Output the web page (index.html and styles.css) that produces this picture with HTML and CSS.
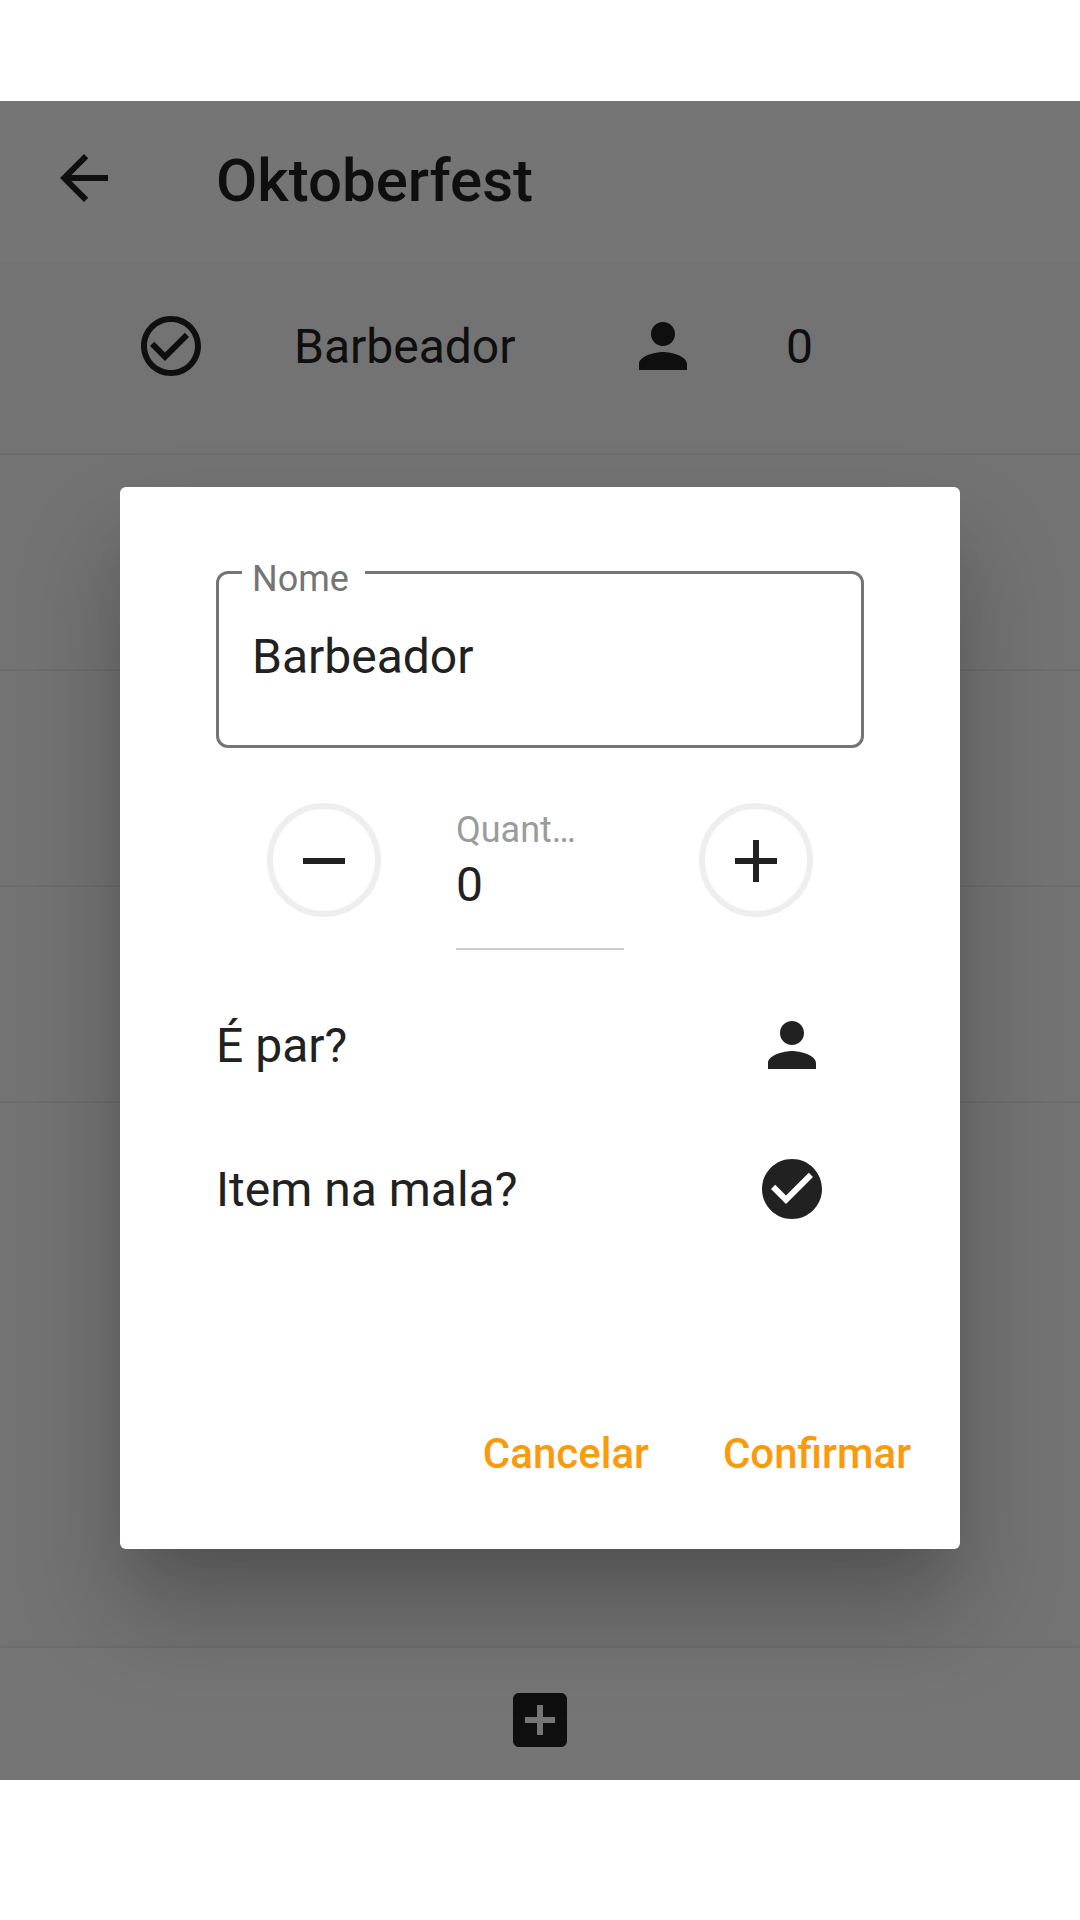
FILE: index.html
```html
<!DOCTYPE html>
<html lang="pt-BR">
<head>
<meta charset="utf-8">
<title>Oktoberfest</title>
<link rel="stylesheet" href="styles.css">
</head>
<body>
<div class="app">
  <header class="app-bar">
    <svg class="icon" viewBox="0 0 24 24"><path d="M20 11H7.83l5.59-5.59L12 4l-8 8 8 8 1.41-1.41L7.83 13H20v-2z"/></svg>
    <h1 class="app-title">Oktoberfest</h1>
  </header>
  <main class="list">
    <div class="row row-first">
      <svg class="icon" viewBox="0 0 24 24"><path d="M16.59 7.58L10 14.17l-3.59-3.58L5 12l5 5 8-8-1.41-1.42zM12 2C6.48 2 2 6.48 2 12s4.48 10 10 10 10-4.48 10-10S17.52 2 12 2zm0 18c-4.42 0-8-3.58-8-8s3.58-8 8-8 8 3.58 8 8-3.58 8-8 8z"/></svg>
      <span class="row-name">Barbeador</span>
      <svg class="icon" viewBox="0 0 24 24"><path d="M12 12c2.21 0 4-1.79 4-4s-1.79-4-4-4-4 1.79-4 4 1.79 4 4 4zm0 2c-2.67 0-8 1.34-8 4v2h16v-2c0-2.66-5.33-4-8-4z"/></svg>
      <span class="row-count">0</span>
    </div>
    <div class="row"></div>
    <div class="row"></div>
    <div class="row"></div>
  </main>
  <footer class="bottom-bar">
    <svg class="icon" viewBox="0 0 24 24"><path d="M19 3H5c-1.11 0-2 .9-2 2v14c0 1.1.89 2 2 2h14c1.1 0 2-.9 2-2V5c0-1.1-.9-2-2-2zm-2 10h-4v4h-2v-4H7v-2h4V7h2v4h4v2z"/></svg>
  </footer>
  <div class="scrim">
    <section class="dialog">
      <fieldset class="field">
        <legend class="field-gap"><span class="field-label">Nome</span></legend>
        <span class="field-value">Barbeador</span>
      </fieldset>
      <div class="stepper">
        <span class="round"><svg class="icon" viewBox="0 0 24 24"><path d="M19 13H5v-2h14v2z"/></svg></span>
        <div class="quantity">
          <span class="quantity-label">Quant…</span>
          <span class="quantity-value">0</span>
        </div>
        <span class="round"><svg class="icon" viewBox="0 0 24 24"><path d="M19 13h-6v6h-2v-6H5v-2h6V5h2v6h6v2z"/></svg></span>
      </div>
      <div class="option">
        <span class="option-label">É par?</span>
        <svg class="icon" viewBox="0 0 24 24"><path d="M12 12c2.21 0 4-1.79 4-4s-1.79-4-4-4-4 1.79-4 4 1.79 4 4 4zm0 2c-2.67 0-8 1.34-8 4v2h16v-2c0-2.66-5.33-4-8-4z"/></svg>
      </div>
      <div class="option">
        <span class="option-label">Item na mala?</span>
        <svg class="icon" viewBox="0 0 24 24"><path d="M12 2C6.48 2 2 6.48 2 12s4.48 10 10 10 10-4.48 10-10S17.52 2 12 2zm-2 15l-5-5 1.41-1.41L10 14.17l7.59-7.59L19 8l-9 9z"/></svg>
      </div>
      <div class="actions">
        <span class="action">Cancelar</span>
        <span class="action">Confirmar</span>
      </div>
    </section>
  </div>
</div>
</body>
</html>
```
FILE: styles.css
```css
* { box-sizing: border-box; }

body {
  margin: 0;
  padding: 101px 0 140px;
  height: 1920px;
  background: #fff;
  color: #212121;
  font: 400 48px/56px Roboto, sans-serif;
}

.icon {
  display: block;
  flex: none;
  width: 72px;
  height: 72px;
  fill: currentColor;
}

.app {
  position: relative;
  display: flex;
  flex-direction: column;
  height: 1679px;
  overflow: hidden;
  background: #fafafa;
}

.app-bar {
  display: flex;
  align-items: center;
  gap: 96px;
  height: 161px;
  padding: 0 48px 7px;
  background: #fff;
}

.app-title {
  margin: 6px 0 0;
  font-size: 60px;
  line-height: 70px;
  font-weight: 500;
}

.list {
  flex: 1;
}

.row {
  display: flex;
  align-items: center;
  height: 216px;
  padding-left: 135px;
  border-bottom: 2px solid #ebebeb;
}

.row-first {
  height: 193px;
  padding-bottom: 23px;
}

.row-name {
  width: 333px;
  margin-left: 87px;
  padding-top: 2px;
}

.row-count {
  margin-left: 87px;
  padding-top: 2px;
}

.bottom-bar {
  display: flex;
  justify-content: center;
  height: 132px;
  padding-top: 36px;
  background: #fff;
  box-shadow: 0 -1px 5px rgba(0, 0, 0, .1);
}

.scrim {
  position: absolute;
  inset: 0;
  padding: 386px 120px 0;
  background: rgba(0, 0, 0, .54);
}

.dialog {
  height: 1062px;
  padding: 84px 96px 0;
  border-radius: 6px;
  background: #fff;
  box-shadow: 0 33px 45px -21px rgba(0, 0, 0, .1), 0 62px 104px 0 rgba(0, 0, 0, .23);
}

.field {
  height: 190px;
  margin: -13px 0 0;
  padding: 0 0 0 33px;
  min-width: 0;
  border: 3px solid #757575;
  border-radius: 12px;
}

.field-gap {
  display: block;
  width: 123px;
  height: 29px;
  margin-left: -10px;
  padding: 0 0 0 10px;
}

.field-label {
  display: block;
  color: #757575;
  font-size: 36px;
  line-height: 42px;
}

.field-value {
  display: block;
  margin-top: 42px;
}

.stepper {
  display: flex;
  justify-content: space-between;
  padding: 55px 51px 0;
}

.round {
  display: flex;
  align-items: center;
  justify-content: center;
  width: 114px;
  height: 114px;
  padding-top: 1px;
  border: 6px solid #eee;
  border-radius: 50%;
}

.quantity {
  width: 168px;
  height: 147px;
  padding-top: 6px;
  border-bottom: 2px solid #ccc;
}

.quantity-label {
  display: block;
  color: #9b9b9b;
  font-size: 36px;
  line-height: 42px;
  white-space: nowrap;
}

.quantity-value {
  display: block;
  margin-top: 6px;
}

.option {
  display: flex;
  align-items: center;
  justify-content: space-between;
  height: 144px;
  padding-right: 36px;
}

.option-label {
  padding-top: 2px;
}

.stepper + .option {
  margin-top: 23px;
}

.actions {
  display: flex;
  justify-content: flex-end;
  gap: 74px;
  margin: 169px -47px 0 0;
  color: #fb9a0c;
  font-size: 42px;
  line-height: 48px;
  font-weight: 500;
}
```
